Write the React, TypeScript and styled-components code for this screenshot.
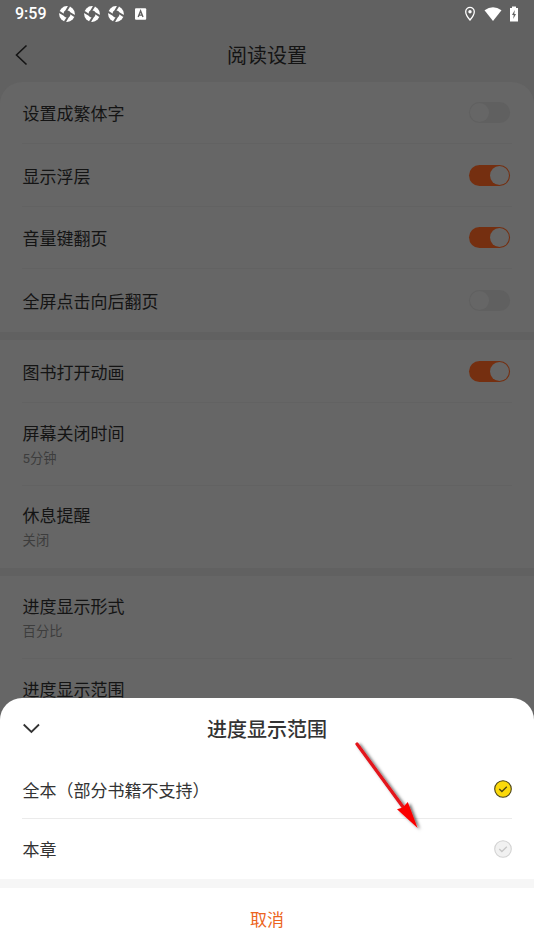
import React from "react";
import styled, { createGlobalStyle } from "styled-components";

const Global = createGlobalStyle`
  * { box-sizing: border-box; }
  body { margin: 0; background: #616161; font-family: Roboto, "Noto Sans CJK SC", sans-serif; }
`;

const Screen = styled.main`
  position: relative;
  width: 534px;
  height: 950px;
  overflow: hidden;
  background: #616161;
`;
const StatusBar = styled.header`
  height: 28px;
  padding: 0 15px 1px 15px;
  display: flex;
  align-items: center;
  color: #fff;
`;
const Clock = styled.span`
  width: 44px;
  padding-top: 1px;
  font: 500 16px/28px Roboto, sans-serif;
`;
const Notifications = styled.div`
  display: flex;
  align-items: center;
  gap: 8.5px;
  flex: 1;
`;
const Indicators = styled.div`
  display: flex;
  align-items: center;
  gap: 7.5px;
`;
const NavBar = styled.nav`
  height: 54px;
  display: grid;
  grid-template-columns: 60px 1fr 60px;
  align-items: center;
  padding-left: 14px;
  padding-right: 14px;
`;
const NavTitle = styled.h1`
  margin: 0;
  padding-top: 2px;
  text-align: center;
  font-size: 20px;
  font-weight: 400;
  line-height: 30px;
  color: #141414;
`;
const Settings = styled.div`
  display: flex;
  flex-direction: column;
  gap: 8px;
`;
const Group = styled.section<{ $first?: boolean }>`
  background: #666;
  border-radius: ${(p) => (p.$first ? "22px 22px 0 0" : "0")};
  padding: 0 22px;
`;
const Row = styled.div<{ $height: number }>`
  height: ${(p) => p.$height}px;
  display: flex;
  align-items: center;
  justify-content: space-between;
  padding-right: 2px;
  border-bottom: 1px solid #626262;
  &:last-child { border-bottom-color: transparent; }
`;
const Labels = styled.div<{ $single: boolean }>`
  display: flex;
  flex-direction: column;
  gap: 1px;
  padding: ${(p) => (p.$single ? 3 : 2)}px 0 0 0.6px;
`;
const Label = styled.span`
  font-size: 17px;
  line-height: 26px;
  color: #141414;
`;
const Value = styled.span`
  font-size: 13.3px;
  line-height: 22px;
  color: #3d3d3d;
`;
const Switch = styled.span<{ $on?: boolean }>`
  width: 41px;
  height: 21px;
  padding: 1px;
  border-radius: 11px;
  display: flex;
  justify-content: ${(p) => (p.$on ? "flex-end" : "flex-start")};
  background: ${(p) => (p.$on ? "#752f10" : "#606060")};
`;
const Knob = styled.span`
  width: 19px;
  height: 19px;
  border-radius: 50%;
  background: #666;
`;
const Sheet = styled.section`
  position: absolute;
  left: 0;
  right: 0;
  bottom: 0;
  height: 252px;
  background: #fff;
  border-radius: 22px 22px 0 0;
`;
const SheetHeader = styled.header`
  height: 62px;
  padding: 0 21px;
  display: grid;
  grid-template-columns: 40px 1fr 40px;
  align-items: center;
`;
const SheetTitle = styled.h2`
  margin: 0;
  padding-top: 1px;
  text-align: center;
  font-size: 20px;
  line-height: 30px;
  font-weight: 500;
  color: #333;
`;
const Option = styled.div<{ $height: number }>`
  height: ${(p) => p.$height}px;
  margin: 0 22px;
  display: flex;
  align-items: center;
  justify-content: space-between;
  border-bottom: 1px solid #ebebeb;
  &:last-of-type { border-bottom-color: transparent; }
`;
const OptionLabel = styled.span`
  padding: 3px 0 0 0.6px;
  font-size: 17px;
  line-height: 26px;
  color: #333;
`;
const Cancel = styled.button`
  display: block;
  width: 100%;
  height: 71px;
  padding: 2px 0 0;
  border: 0;
  border-top: 9px solid #f6f6f6;
  background: #fff;
  color: #ec6420;
  font: 400 17px/26px Roboto, "Noto Sans CJK SC", sans-serif;
`;
const Pointer = styled.svg`
  position: absolute;
  left: 340px;
  top: 730px;
`;

const Shutter = () => (
  <svg width="16" height="16" viewBox="0 0 16 16">
    <circle cx="8" cy="8" r="7.9" fill="#fff" />
    <circle cx="8" cy="8" r="3.4" fill="#616161" />
    {[0, 90, 180, 270].map((a) => (
      <path key={a} d="M4.9 6.6 10.8.2 12.8 1.2 8 6z" fill="#616161" transform={`rotate(${a - 12} 8 8)`} />
    ))}
  </svg>
);

const Check = ({ on }: { on?: boolean }) => (
  <svg width="18" height="18" viewBox="0 0 18 18" fill="none">
    <circle cx="9" cy="9" r="8.3" fill={on ? "#fbd90b" : "#f1f1f1"} stroke={on ? "#4a4214" : "#d2d2d2"} strokeWidth="1.1" />
    <path d="m5.3 9 2.6 2.5 4.9-4.7" stroke={on ? "#4a4214" : "#c6c6c6"} strokeWidth="1.3" />
  </svg>
);

type Item = { label: string; height: number; on?: boolean; value?: string };
const groups: Item[][] = [
  [
    { label: "设置成繁体字", height: 62, on: false },
    { label: "显示浮层", height: 63, on: true },
    { label: "音量键翻页", height: 62, on: true },
    { label: "全屏点击向后翻页", height: 63, on: false },
  ],
  [
    { label: "图书打开动画", height: 63, on: true },
    { label: "屏幕关闭时间", height: 83, value: "5分钟" },
    { label: "休息提醒", height: 82, value: "关闭" },
  ],
  [
    { label: "进度显示形式", height: 83, value: "百分比" },
    { label: "进度显示范围", height: 83, value: "全本" },
  ],
];

export default function App() {
  return (
    <Screen lang="zh-CN">
      <Global />
      <StatusBar>
        <Clock>9:59</Clock>
        <Notifications>
          <Shutter />
          <Shutter />
          <Shutter />
          <svg width="16" height="12" viewBox="0 0 16 12">
            <rect x="2" y=".2" width="11.2" height="11.6" rx="1" fill="#fff" />
            <path d="m5.2 9 2.4-6 2.4 6M6 7.1h3.2" fill="none" stroke="#616161" strokeWidth="1.4" />
          </svg>
        </Notifications>
        <Indicators>
          <svg width="12" height="16" viewBox="0 0 12 16" fill="none">
            <path d="M6 1.4a4.3 4.3 0 0 0-4.3 4.3C1.7 9 6 14 6 14s4.3-5 4.3-8.3A4.3 4.3 0 0 0 6 1.4z" stroke="#fff" strokeWidth="1.3" />
            <circle cx="6" cy="5.7" r="1.7" fill="#fff" />
          </svg>
          <svg width="18" height="14" viewBox="0 0 18 14">
            <path d="M.5 3.2Q9-2.8 17.5 3.2L9 14z" fill="#fff" />
          </svg>
          <svg width="10" height="16" viewBox="0 0 10 16">
            <path d="M3 .5h4V2h2v13.5H1V2h2z" fill="#fff" />
            <path d="M5.8 4 3 9h1.7L4.2 13 7 8H5.3z" fill="#616161" />
          </svg>
        </Indicators>
      </StatusBar>
      <NavBar>
        <svg width="14" height="22" viewBox="0 0 14 22" fill="none">
          <path d="M12.5 1.5 2.5 11l10 9.5" stroke="#141414" strokeWidth="1.6" />
        </svg>
        <NavTitle>阅读设置</NavTitle>
      </NavBar>
      <Settings>
        {groups.map((items, i) => (
          <Group key={i} $first={i === 0}>
            {items.map((item) => (
              <Row key={item.label} $height={item.height}>
                <Labels $single={!item.value}>
                  <Label>{item.label}</Label>
                  {item.value && <Value>{item.value}</Value>}
                </Labels>
                {item.on !== undefined && (
                  <Switch $on={item.on}>
                    <Knob />
                  </Switch>
                )}
              </Row>
            ))}
          </Group>
        ))}
      </Settings>
      <Sheet>
        <SheetHeader>
          <svg width="20" height="14" viewBox="0 0 20 14" fill="none">
            <path d="m2.7 2.5 7.7 7.5L18 2.5" stroke="#333" strokeWidth="1.8" />
          </svg>
          <SheetTitle>进度显示范围</SheetTitle>
        </SheetHeader>
        <Option $height={59}>
          <OptionLabel>全本（部分书籍不支持）</OptionLabel>
          <Check on />
        </Option>
        <Option $height={60}>
          <OptionLabel>本章</OptionLabel>
          <Check />
        </Option>
        <Cancel>取消</Cancel>
      </Sheet>
      <Pointer width="100" height="110" viewBox="0 0 100 110">
        <defs>
          <filter id="shadow" x="-20%" y="-20%" width="150%" height="150%">
            <feDropShadow dx="2.5" dy="1.5" stdDeviation="1.8" floodColor="#000" floodOpacity=".6" />
          </filter>
        </defs>
        <g filter="url(#shadow)">
          <path d="m17 14 46 63" stroke="#e3131b" strokeWidth="3.2" strokeLinecap="round" />
          <path d="M77.6 98 57 79.3 62.8 77.5 67.8 72z" fill="#fa0505" />
        </g>
      </Pointer>
    </Screen>
  );
}
